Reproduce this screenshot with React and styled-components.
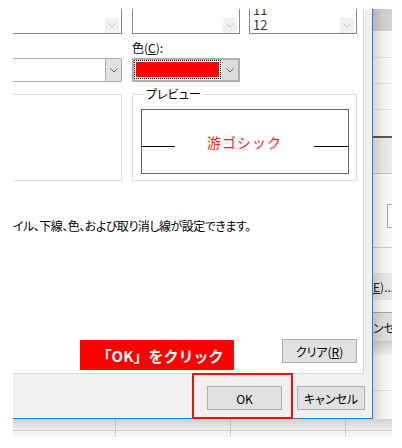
import React from 'react'
import styled, { createGlobalStyle } from 'styled-components'

const GlobalStyle = createGlobalStyle`
  * { box-sizing: border-box; }
  html, body { margin: 0; background: #fff; }
  body {
    font-family: "Noto Sans CJK JP", "Noto Sans", sans-serif;
    font-size: 12px;
    color: #1a1a1a;
    font-feature-settings: "palt";
  }
`

const Page = styled.div`
  width: 392px;
  padding: 9px 0 0 13px;
`
const Top = styled.div`
  display: flex;
  height: 410px;
`
const Dialog = styled.div`
  position: relative;
  width: 360px;
  display: flex;
  flex-direction: column;
  background: #f0f0f0;
  border-right: 1px solid #2b7cd3;
  border-bottom: 1px solid #2b7cd3;
`
const TabPage = styled.div`
  width: 351px;
  height: 365px;
  display: flex;
  flex-direction: column;
  background: #fff;
  border-right: 1px solid #d9d9d9;
  border-bottom: 1px solid #d9d9d9;
  overflow: hidden;
`
const Row = styled.div`
  display: flex;
  align-items: flex-start;
  margin-top: ${p => p.$top || 0}px;
`
const ListBox = styled.div`
  display: flex;
  justify-content: space-between;
  width: ${p => p.$w}px;
  height: 25px;
  margin-left: ${p => p.$left || 0}px;
  padding-right: 2px;
  border: 1px solid #828790;
  border-top: none;
  ${p => p.$cut && 'border-left: none;'}
  overflow: hidden;
`
const ListItems = styled.div`
  margin-top: -7px;
  padding-left: 3px;
  font-size: 13px;
  line-height: 15px;
  color: #333;
`
const ScrollButton = styled.div`
  align-self: flex-end;
  margin-left: auto;
  width: 14px;
  height: 15px;
  display: flex;
  align-items: center;
  justify-content: center;
  background: #f0f0f0;
`
const Label = styled.div`
  margin: 6px 0 0 119px;
  height: 16px;
  line-height: 16px;
  color: #000;
`
const Combo = styled.div`
  display: flex;
  width: 109px;
  height: 24px;
  background: #fff;
  border: 1px solid #adadad;
  border-left: none;
`
const DropButton = styled.div`
  margin-left: auto;
  width: ${p => p.$w || 16}px;
  display: flex;
  align-items: center;
  justify-content: center;
  background: ${p => p.$bg || '#e1e1e1'};
  ${p => p.$edge && 'border-left: 1px solid #adadad;'}
`
const ColorCombo = styled.div`
  display: flex;
  width: 108px;
  height: 24px;
  margin-left: 10px;
  background: #fff;
  border: 2px solid #adadad;
`
const FocusRect = styled.div`
  width: 87px;
  height: 19px;
  padding: 1px;
  border: 1px dotted #000;
`
const Swatch = styled.div`
  height: 100%;
  background: ${p => p.$color};
`
const Group = styled.fieldset`
  margin: ${p => (p.$legend ? 0 : 7)}px 0 0 ${p => p.$left || 0}px;
  padding: ${p => (p.$legend ? '8px 0 0 8px' : 0)};
  width: ${p => p.$w}px;
  height: ${p => (p.$legend ? 94 : 87)}px;
  min-width: 0;
  border: 1px solid #dcdcdc;
  ${p => p.$cut && 'border-left: none;'}
`
const Legend = styled.legend`
  margin-left: 3px;
  padding: 0 2px;
  line-height: 14px;
  color: #000;
`
const Preview = styled.div`
  display: flex;
  width: 208px;
  height: 65px;
  border: 1px solid #646464;
`
const BaseLine = styled.div`
  width: ${p => p.$w}px;
  height: 1px;
  margin-top: 36px;
  background: #000;
`
const Sample = styled.div`
  flex: 1;
  align-self: center;
  text-align: center;
  font-size: 14px;
  letter-spacing: 1px;
  line-height: 18px;
  color: #ff1a1a;
  font-feature-settings: normal;
`
const Note = styled.div`
  margin-top: 37px;
  line-height: 16px;
  letter-spacing: -0.5px;
  color: #000;
`
const BottomRow = styled.div`
  display: flex;
  align-items: flex-start;
  margin-top: auto;
  padding: 0 6px 3px 0;
`
const Banner = styled.div`
  margin: 1px 0 0 67px;
  width: 154px;
  height: 30px;
  display: flex;
  align-items: center;
  justify-content: center;
  padding-left: 6px;
  background: #ff0000;
  color: #fff;
  font-size: 15px;
  font-weight: 700;
  font-feature-settings: normal;
`
const Button = styled.button`
  width: ${p => p.$w}px;
  height: 24px;
  margin-left: ${p => (p.$auto ? 'auto' : '0')};
  padding: 0;
  font: inherit;
  color: #000;
  background: #e1e1e1;
  border: 1px solid #adadad;
`
const ButtonBar = styled.div`
  height: 44px;
  display: flex;
  justify-content: flex-end;
  gap: 15px;
  padding: 12px 7px 0 0;
`
const Highlight = styled.div`
  position: absolute;
  left: 179px;
  top: 364px;
  width: 101px;
  height: 46px;
  border: 2px solid #ee1111;
`
const Back = styled.div`
  position: relative;
  width: 19px;
  display: flex;
  flex-direction: column;
  background: #fafafa;
  overflow: hidden;
  &::after {
    content: '';
    position: absolute;
    inset: 0;
    background: linear-gradient(to right, rgba(0, 0, 0, 0.14), rgba(0, 0, 0, 0.04) 10px, rgba(0, 0, 0, 0) 19px);
  }
`
const BackRow = styled.div`
  height: ${p => p.$h}px;
  flex-shrink: 0;
  display: flex;
  align-items: center;
  white-space: nowrap;
  background: ${p => p.$bg || 'transparent'};
  ${p => p.$line && `border-bottom: ${p.$lw || 1}px solid ${p.$line};`}
`
const SpinBox = styled.div`
  margin-left: 14px;
  width: 10px;
  height: 100%;
  border: 1px solid #adadad;
  border-right: none;
  background: #fff;
`
const Grid = styled.div`
  position: relative;
  display: grid;
  grid-template-columns: 103px 115px 115px 1fr;
  grid-template-rows: 12px 6px;
  width: 379px;
  background: #f7f7f7;
  &::after {
    content: '';
    position: absolute;
    inset: 0;
    background: linear-gradient(to bottom, rgba(0, 0, 0, 0.16), rgba(0, 0, 0, 0.03) 11px, rgba(0, 0, 0, 0));
  }
`
const Cell = styled.div`
  ${p => !p.$last && 'border-right: 1px solid #d4d4d4;'}
  ${p => p.$top && 'border-bottom: 1px solid #d4d4d4;'}
`

const Chevron = ({ color = '#606060' }) => (
  <svg width="8" height="5" viewBox="0 0 8 5">
    <path d="M0.5 0.5 L4 4 L7.5 0.5" fill="none" stroke={color} strokeWidth="1" />
  </svg>
)

const App = () => (
  <Page>
    <GlobalStyle />
    <Top>
      <Dialog>
        <TabPage>
          <Row>
            <ListBox $w={109} $cut>
              <ScrollButton><Chevron color="#c0c0c0" /></ScrollButton>
            </ListBox>
            <ListBox $w={108} $left={10}>
              <ScrollButton><Chevron color="#c0c0c0" /></ScrollButton>
            </ListBox>
            <ListBox $w={108} $left={9}>
              <ListItems>
                <div>11</div>
                <div>12</div>
              </ListItems>
              <ScrollButton><Chevron color="#c0c0c0" /></ScrollButton>
            </ListBox>
          </Row>
          <Label>色(<u>C</u>):</Label>
          <Row $top={2}>
            <Combo>
              <DropButton $edge><Chevron /></DropButton>
            </Combo>
            <ColorCombo>
              <FocusRect><Swatch $color="#ff0000" /></FocusRect>
              <DropButton $bg="#dcdcdc"><Chevron /></DropButton>
            </ColorCombo>
          </Row>
          <Row $top={5}>
            <Group $w={109} $cut />
            <Group $w={225} $left={10} $legend>
              <Legend>プレビュー</Legend>
              <Preview>
                <BaseLine $w={33} />
                <Sample>游ゴシック</Sample>
                <BaseLine $w={34} />
              </Preview>
            </Group>
          </Row>
          <Note>イル、下線、色、および取り消し線が設定できます。</Note>
          <BottomRow>
            <Banner>「OK」をクリック</Banner>
            <Button $w={75} $auto>クリア(<u>R</u>)</Button>
          </BottomRow>
        </TabPage>
        <ButtonBar>
          <Button $w={75}>OK</Button>
          <Button $w={68}>キャンセル</Button>
        </ButtonBar>
        <Highlight />
      </Dialog>
      <Back>
        <BackRow $h={22} $bg="#d4d4d7" />
        <BackRow $h={27} $line="#e4e4e4" />
        <BackRow $h={26} $line="#e4e4e4" />
        <BackRow $h={26} $line="#e4e4e4" />
        <BackRow $h={28} $line="#5a5a5a" $lw={2} />
        <BackRow $h={36} $bg="#ececec" $line="#c8c8c8" />
        <BackRow $h={30} />
        <BackRow $h={24}><SpinBox /></BackRow>
        <BackRow $h={20} $line="#cdcdcd" />
        <BackRow $h={25} />
        <BackRow $h={27} $bg="#e8e8e8"><u>E</u>)...</BackRow>
        <BackRow $h={13} $line="#a8a8a8" />
        <BackRow $h={28} $bg="#e1e1e1">ンセル</BackRow>
        <BackRow $h={15} $bg="linear-gradient(#cfcfcf, #f6f6f6)" />
        <BackRow $h={35} $line="#dedede" />
        <BackRow $h={28} />
      </Back>
    </Top>
    <Grid>
      <Cell $top />
      <Cell $top />
      <Cell $top />
      <Cell $top $last />
      <Cell />
      <Cell />
      <Cell />
      <Cell $last />
    </Grid>
  </Page>
)

export default App
